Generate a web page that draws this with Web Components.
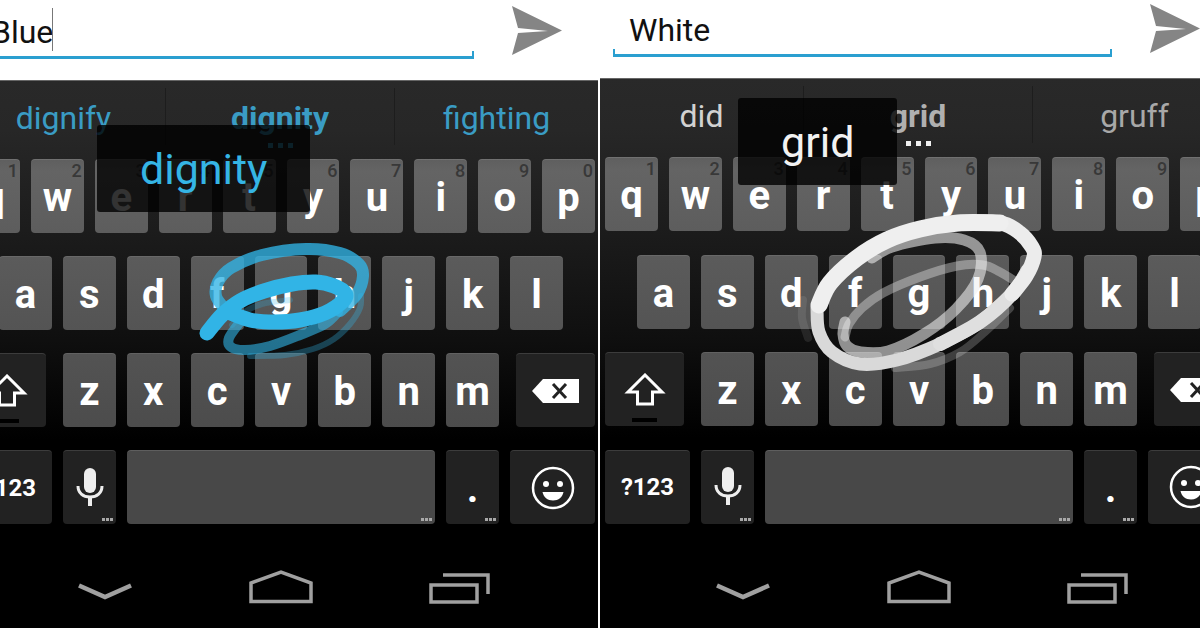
<!DOCTYPE html>
<html lang="en">
<head>
<meta charset="utf-8">
<meta name="viewport" content="width=device-width, initial-scale=1">
<title>Gesture keyboard trail colours</title>
<style>
  html, body { margin: 0; height: 100%; }
  body { background: #fff; font-family: Roboto, "Liberation Sans", sans-serif; }
</style>
</head>
<body>
<phone-compare>
  <phone-screen style="--bleed:38px;--shift:-38px;--head:80px;--accent:#3a9cc4;--strong:#3a9cc4;--popup:#35b5e5;--dots:#3a9fc9" class="blue" message="Blue" caret words="dignify,dignity,fighting" trail="blue">
    <word-popup slot="popup" style="--x:135px;--y:125px">dignity</word-popup>
  </phone-screen>
  <phone-screen style="--bleed:36px;--shift:0px;--head:78px;--accent:#a8a8a8;--strong:#b0b0b0;--first:#d2d2d2;--popup:#f2f2f2;--dots:#f0f0f0" message="White" words="did,grid,gruff" trail="white">
    <word-popup slot="popup" style="--x:138px;--y:98px">grid</word-popup>
  </phone-screen>
</phone-compare>

<script>
/* Turns a list of points into a smooth cubic path. */
function smooth(pts) {
  const p = pts.split(' ').map(s => s.split(',').map(Number));
  let d = `M${p[0]}`;
  for (let i = 0; i < p.length - 1; i++) {
    const a = p[i - 1] || p[i], b = p[i], c = p[i + 1], e = p[i + 2] || c;
    d += `C${b[0] + (c[0] - a[0]) / 6},${b[1] + (c[1] - a[1]) / 6} ${c[0] - (e[0] - b[0]) / 6},${c[1] - (e[1] - b[1]) / 6} ${c[0]},${c[1]}`;
  }
  return d;
}

const ICONS = {
  shift: '<svg width="42" height="34" viewBox="0 0 42 34"><path d="M21 2L4 19H13.500v12h15V19H38z" fill="none" stroke="#fff" stroke-width="3"/></svg>',
  del: '<svg width="47" height="24" viewBox="0 0 47 24"><path d="M0 12L11 0h36v24H11z" fill="#fff"/><path d="M21 5l13 14M34 5L21 19" stroke="#222" stroke-width="3"/></svg>',
  mic: '<svg width="28" height="40" viewBox="0 0 28 40"><rect x="8" y="0" width="12" height="25" rx="6" fill="#eee"/><path d="M2 18c0 7 5 11 12 11s12-4 12-11" fill="none" stroke="#eee" stroke-width="3"/><path d="M14 29v9" stroke="#eee" stroke-width="4"/></svg>',
  smile: '<svg width="44" height="44" viewBox="0 0 44 44"><circle cx="22" cy="22" r="20" fill="none" stroke="#fff" stroke-width="2.500"/><circle cx="15" cy="18" r="3" fill="#fff"/><circle cx="29" cy="18" r="3" fill="#fff"/><path d="M11.500 26h21c-1 5-5 8.500-10.500 8.500S12.500 31 11.500 26z" fill="#fff"/></svg>'
};
const NAMES = { shift: 'Shift', del: 'Delete', mic: 'Voice input', smile: 'Emoji' };

/* Each stroke: points, width, opacity, colour. Oldest part of the gesture first. */
const TRAILS = {
  blue: [
    ['361,296 360,308 350,324 334,339 313,349 285,355 250,356', 6, .32, '#31b4e6'],
    ['232,325 243,313 262,304 290,300', 6, .25, '#31b4e6'],
    ['338,312 325,324 300,335 270,346 245,350 231,347 229,338 240,322', 10, .6, '#31b4e6'],
    ['224,308 216,296 218,282 231,268 262,255 306,249 340,253 359,264 363,276 357,294 340,311', 12, .78, '#31b4e6'],
    ['207,333 222,315 240,301 264,291 292,284 316,282 334,286 345,293 343,301 325,313 300,320 275,322 250,320 228,312', 15, 1, '#31b4e6']
  ],
  white: [
    ['203,300 202,318 208,338', 8, .1, '#f0f0f0'],
    ['295,368 330,364 360,352 385,332 410,308', 8, .22, '#f0f0f0'],
    ['245,337 249,324 262,308 283,293 320,277 357,266 383,265 400,272 415,281', 9, .38, '#f0f0f0'],
    ['272,258 292,247 335,238 364,240 380,252 378,279 356,309 324,334 288,351 261,352 247,346 243,334 245,322', 11, .58, '#f0f0f0'],
    ['217,308 219,332 232,352 260,364 297,360 340,344 380,322 412,294', 13, 1, '#d9d9d9'],
    ['340,344 380,322 412,294 428,270', 14, 1, '#dfdfdf'],
    ['219,305 230,283 257,258 287,240 320,229 358,223 400,223 420,233 432,247 434,257 426,276 412,294', 15, 1, '#ececec'],
    ['219,305 230,283 257,258 287,240 320,229 358,223 400,223', 17, 1, '#efefef']
  ]
};

customElements.define('phone-compare', class extends HTMLElement {
  constructor() {
    super();
    this.attachShadow({ mode: 'open' }).innerHTML = `
      <style>
        :host { display: grid; grid-template-columns: minmax(0, 1fr) minmax(0, 1fr); min-height: 100vh; overflow: hidden; }
        ::slotted(.blue) { border-right: 2px solid #fff; }
      </style>
      <slot></slot>`;
  }
});

customElements.define('word-popup', class extends HTMLElement {
  constructor() {
    super();
    this.attachShadow({ mode: 'open' }).innerHTML = `
      <style>
        :host { position: absolute; left: var(--x); top: var(--y); padding: 0 43px; height: 87px; line-height: 88px;
          border-radius: 3px; background: rgba(0,0,0,.8); color: var(--popup); font-size: 43px; z-index: 2; }
      </style>
      <slot></slot>`;
  }
});

customElements.define('key-cap', class extends HTMLElement {
  connectedCallback() {
    const icon = this.getAttribute('icon'), hint = this.getAttribute('hint');
    this.attachShadow({ mode: 'open' }).innerHTML = `
      <style>
        :host { display: block; flex: 1 1 0; min-width: 0; }
        :host([size="shift"]) { flex: 0 0 79px; }
        :host([size="wide"]) { flex: 0 0 85px; }
        :host([size="one"]) { flex: 0 0 53px; }
        button { position: relative; box-sizing: border-box; display: flex; align-items: center; justify-content: center;
          width: 100%; height: 74px; margin: 0; padding: 3px 0 0; border: 0; border-top: 1px solid rgba(255,255,255,.12);
          border-radius: 4px; background: var(--cap); color: #fff; font: 700 40px/44px Roboto, sans-serif; }
        :host([dark]) button { background: #222; }
        :host([icon]) button, :host([small]) button { padding: 0; }
        :host([small]) button { font-size: 24px; }
        .hint { position: absolute; top: 2px; right: 2px; font: 500 18px/18px Roboto, sans-serif; color: #383838; }
        .more { position: absolute; right: 3px; bottom: 3px; width: 11px; height: 3px;
          background: repeating-linear-gradient(90deg, #a8a8a8 0 3px, transparent 3px 4px); }
        .lock { position: absolute; bottom: 4px; left: 27px; width: 25px; height: 4px; background: #000; }
        svg { display: block; }
      </style>
      <button type="button" aria-label="${icon ? NAMES[icon] : this.getAttribute('label') || 'Space'}">
        ${icon ? ICONS[icon] : `<span>${this.getAttribute('label') || ''}</span>`}
        ${hint ? `<span class="hint">${hint}</span>` : ''}
        ${this.hasAttribute('more') ? '<span class="more"></span>' : ''}
        ${icon === 'shift' ? '<span class="lock"></span>' : ''}
      </button>`;
  }
});

customElements.define('key-board', class extends HTMLElement {
  connectedCallback() {
    const caps = s => [...s].map(c => `<key-cap label="${c}"></key-cap>`).join('');
    this.attachShadow({ mode: 'open' }).innerHTML = `
      <style>
        :host { flex: 1; display: flex; flex-direction: column; justify-content: space-between; padding: 0 3px 0 5px; }
        .row { display: flex; gap: 11px; }
        .top { --cap: linear-gradient(#5f5f5f, #646464 15%, #5d5d5d); }
        .home { --cap: linear-gradient(#5b5b5b, #545454); padding: 0 32px; }
        .low { --cap: linear-gradient(#535353, #4c4c4c); gap: 17px; }
        .low .row { flex: 1; }
        .space { --cap: #484848; }
      </style>
      <div class="row top">${[...'qwertyuiop'].map((c, i) => `<key-cap label="${c}" hint="${(i + 1) % 10}"></key-cap>`).join('')}</div>
      <div class="row home">${caps('asdfghjkl')}</div>
      <div class="row low">
        <key-cap icon="shift" size="shift" dark></key-cap>
        <div class="row">${caps('zxcvbnm')}</div>
        <key-cap icon="del" size="shift" dark></key-cap>
      </div>
      <div class="row space">
        <key-cap label="?123" size="wide" dark small></key-cap>
        <key-cap icon="mic" size="one" dark more></key-cap>
        <key-cap more></key-cap>
        <key-cap label="." size="one" dark more></key-cap>
        <key-cap icon="smile" size="wide" dark></key-cap>
      </div>`;
  }
});

customElements.define('nav-bar', class extends HTMLElement {
  constructor() {
    super();
    this.attachShadow({ mode: 'open' }).innerHTML = `
      <style>
        :host { display: flex; height: 58px; padding: 46px 51px 0 52px; }
        button { flex: 1; display: flex; align-items: flex-start; justify-content: center; padding: 0; margin: 0; border: 0; background: none; }
        svg { fill: none; stroke: #a0a0a0; stroke-width: 4; }
      </style>
      <button type="button" aria-label="Hide keyboard"><svg width="64" height="34"><path d="M8 15.500l26 11.500L60 15.500" stroke-width="4.500"/></svg></button>
      <button type="button" aria-label="Home"><svg width="64" height="34"><path d="M2 31.500V13L32 2 62 13v18.500z" stroke-width="3.500"/></svg></button>
      <button type="button" aria-label="Recent apps"><svg width="64" height="34"><path d="M5 15h46v17H5zM17 5h45v19" stroke-width="3.500"/></svg></button>`;
  }
});

customElements.define('phone-screen', class extends HTMLElement {
  connectedCallback() {
    const [a, b, c] = this.getAttribute('words').split(',');
    const strokes = TRAILS[this.getAttribute('trail')];
    this.attachShadow({ mode: 'open' }).innerHTML = `
      <style>
        :host { display: block; position: relative; overflow: hidden; min-width: 0; }
        .phone { position: relative; display: flex; flex-direction: column; box-sizing: border-box; min-height: 100%;
          width: calc(100% + var(--bleed)); margin-left: var(--shift); }
        header { box-sizing: border-box; display: flex; align-items: flex-end; height: var(--head); padding: 0 36px 21px 13px; background: #fff; }
        .field { position: relative; flex: 1; margin-right: 38px; }
        input { display: block; box-sizing: border-box; width: 100%; height: 52px; padding: 0 16px 0; border: 0; outline: 0;
          border-bottom: 3px solid #2a9fd0; background: none; color: #111; font: 400 32px/40px Roboto, sans-serif; }
        .field::before, .field::after { content: ""; position: absolute; bottom: 0; width: 2px; height: 8px; background: #2a9fd0; }
        .field::before { left: 0; } .field::after { right: 0; }
        .caret { position: absolute; left: 77px; bottom: 8px; width: 1px; height: 43px; background: #777; }
        .send { margin: 0 0 4px; padding: 0; border: 0; background: none; }
        .send svg { display: block; }
        .board { flex: 1; display: flex; flex-direction: column; background: linear-gradient(#292929 0, #272727 50px, #1c1c1c 150px, #0f0f0f 260px, #000 360px); box-shadow: inset 0 1px #666; }
        .strip { display: flex; height: 79px; }
        .strip button { position: relative; flex: 203 1 0; margin: 0; padding: 0 0 4px; border: 0; background: none; color: var(--accent); font: 400 32px/40px Roboto, sans-serif; }
        .strip button:first-child { color: var(--first, var(--accent)); }
        .strip .mid { flex-grow: 230; font-weight: 700; color: var(--strong); }
        .mid::before { content: ""; position: absolute; inset: 8px 0 14px; border: solid #1d1d1d; border-width: 0 1px; }
        .mid::after { content: ""; position: absolute; bottom: 11px; left: calc(50% - 12px); width: 25px; height: 5px;
          background: repeating-linear-gradient(90deg, var(--dots) 0 5px, transparent 5px 10px); }
        .trail { position: absolute; left: 0; top: 0; width: 100%; height: 100%; fill: none; stroke-linecap: round; stroke-linejoin: round; pointer-events: none; }
      </style>
      <div class="phone">
        <header>
          <div class="field"><input type="text" aria-label="Message" value="${this.getAttribute('message')}">${this.hasAttribute('caret') ? '<span class="caret"></span>' : ''}</div>
          <button class="send" type="button" aria-label="Send"><svg width="50" height="49" viewBox="0 0 50 49"><path d="M0 0l50 24.500L0 49l6-22 30-2-30-3z" fill="#858585"/></svg></button>
        </header>
        <div class="board">
          <div class="strip"><button type="button">${a}</button><button type="button" class="mid">${b}</button><button type="button">${c}</button></div>
          <key-board></key-board>
          <nav-bar></nav-bar>
        </div>
        <slot name="popup"></slot>
      </div>
      <svg class="trail">${strokes.map(([p, w, o, color]) => `<path d="${smooth(p)}" stroke="${color}" stroke-width="${w}" opacity="${o}"/>`).join('')}</svg>`;
  }
});
</script>
</body>
</html>
